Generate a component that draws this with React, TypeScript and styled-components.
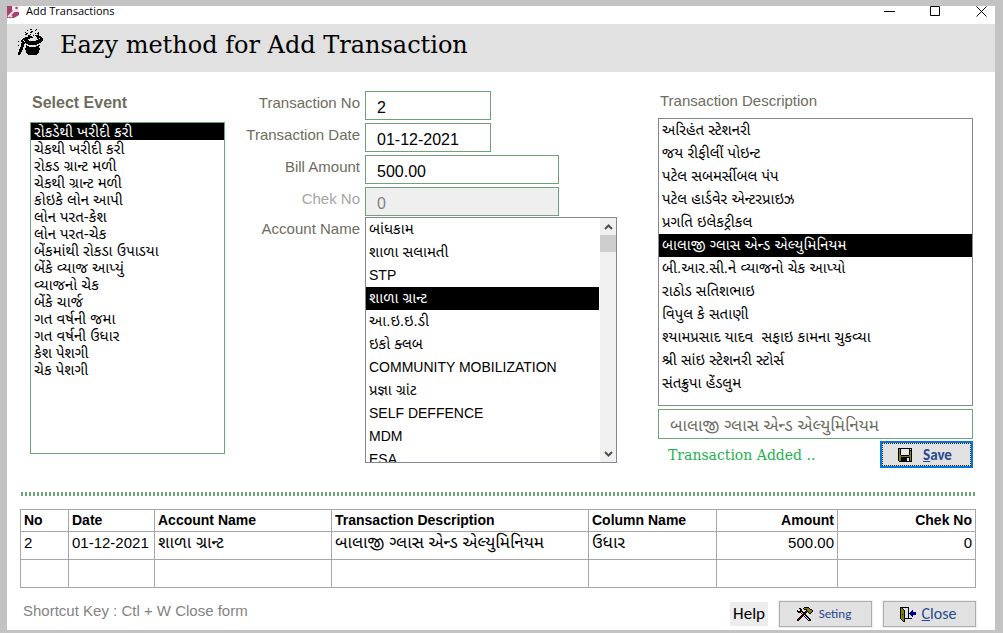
import React from "react";
import styled, { createGlobalStyle } from "styled-components";

const UI = '"Liberation Sans", Arial, "Noto Sans Gujarati", "Lohit Gujarati", sans-serif';
const SLAB = 'Rockwell, "DejaVu Serif", serif';
const BUTTON = 'Calibri, Lato, sans-serif';
const GREEN = "#6fa276";
const LABEL = "#6d6c5e";

const GlobalStyle = createGlobalStyle`
  *, *::before, *::after { box-sizing: border-box; }
  body { margin: 0; background: #c3c3c3; font-family: ${UI}; color: #000; }
  button, input, select { font: inherit; margin: 0; }
`;

const Frame = styled.div`
  min-height: 100vh;
  display: flex;
  padding: 6px 8px 3px 7px;
`;

const Window = styled.div`
  flex: 1;
  min-width: 0;
  background: #fff;
`;

const TitleBar = styled.div`
  display: flex;
  height: 18px;
  font: 11px/10px "Segoe UI", "Open Sans", sans-serif;
`;

const TitleText = styled.span`
  flex: 1;
  padding-left: 6px;
`;

const Controls = styled.div`
  display: flex;
  gap: 18px;
`;

const ControlButton = styled.button`
  width: 28px;
  height: 12px;
  padding: 0;
  border: 0;
  background: none;
  display: flex;
  justify-content: center;
`;

const Banner = styled.header`
  display: flex;
  align-items: flex-start;
  gap: 17px;
  height: 48px;
  padding: 5px 11px 0;
  background: #e1e1e1;
`;

const BannerTitle = styled.h1`
  margin: 0;
  font: 24px/32px ${SLAB};
`;

const Main = styled.main`
  display: grid;
  grid-template-columns: minmax(0, 195fr) minmax(0, 393fr) minmax(0, 315fr);
  column-gap: 20px;
  padding: 19px 22px 0 23px;
`;

const Column = styled.section`
  display: flex;
  flex-direction: column;
`;

const ColumnLabel = styled.label<{ $bold?: boolean }>`
  padding-left: 2px;
  margin-bottom: 7px;
  color: ${LABEL};
  font-size: ${(p) => (p.$bold ? 16 : 15)}px;
  font-weight: ${(p) => (p.$bold ? 700 : 400)};
  line-height: ${(p) => (p.$bold ? 24 : 20)}px;
`;

const List = styled.select<{ $dense?: boolean; $height: number; $border?: string }>`
  appearance: none;
  width: 100%;
  height: ${(p) => p.$height}px;
  padding: 0;
  border: ${(p) => (p.$border ? `1px solid ${p.$border}` : "0")};
  border-radius: 0;
  outline: 0;
  background: #fff;
  overflow: hidden;

  option {
    display: block;
    height: ${(p) => (p.$dense ? 17 : 23)}px;
    min-height: 0;
    padding: ${(p) => (p.$dense ? 0 : 3)}px 3px 0;
    color: #000;
    font: 14px ${UI};
    white-space: pre;
  }
  option:lang(gu) {
    padding-top: ${(p) => (p.$dense ? 0 : 2)}px;
    font-size: 15px;
  }
  option:checked {
    background: #000 linear-gradient(#000, #000);
    -webkit-text-fill-color: #fff;
  }
`;

const FormColumn = styled(Column)`
  padding-right: 21px;
  gap: 1px;
`;

const Fields = styled.div`
  display: flex;
  flex-direction: column;
  gap: 3px;
`;

const Field = styled.div`
  display: grid;
  grid-template-columns: 115px minmax(0, 1fr);
  column-gap: 5px;
`;

const FieldLabel = styled.label<{ $muted?: boolean }>`
  color: ${(p) => (p.$muted ? "#a5a5a5" : LABEL)};
  font-size: 15px;
  line-height: 24px;
  text-align: right;
  white-space: nowrap;
`;

const TextInput = styled.input<{ $width?: string }>`
  width: ${(p) => p.$width ?? "100%"};
  height: 29px;
  padding: 5px 10px 0 11px;
  border: 1px solid ${GREEN};
  border-radius: 0;
  outline: 0;
  background: #fff;
  color: #000;
  font-size: 16px;

  &:disabled {
    background: #efefef;
    color: #838383;
  }
  &:lang(gu) {
    height: 30px;
    color: ${LABEL};
    font-size: 17px;
  }
`;

const ScrollBox = styled.div`
  display: flex;
  border: 1px solid #828790;
`;

const ScrollBar = styled.div`
  flex: none;
  width: 17px;
  display: flex;
  flex-direction: column;
  background: #f0f0f0;
  border-left: 1px solid #fff;
`;

const ScrollButton = styled.button`
  height: 17px;
  padding: 0;
  border: 0;
  background: none;
  display: flex;
  align-items: center;
  justify-content: center;
`;

const ScrollThumb = styled.div`
  height: 17px;
  margin-bottom: auto;
  background: #cdcdcd;
`;

const Stack = styled.div`
  display: grid;
  row-gap: 3px;
`;

const SaveRow = styled.div`
  display: flex;
  align-items: center;
  justify-content: space-between;
  padding: 2px 0 0 10px;
`;

const Status = styled.output`
  color: #22b14c;
  font: 14px/24px ${SLAB};
`;

const PushButton = styled.button<{ $size?: number }>`
  width: 93px;
  height: 26px;
  display: flex;
  align-items: center;
  justify-content: center;
  gap: 6px;
  padding: 0 3px 0 0;
  border: 1px solid #adadad;
  box-shadow: 0 0 0 1px #efefef;
  background: #e1e1e1;
  color: #27488c;
  font: ${(p) => p.$size ?? 16}px/20px ${BUTTON};
`;

const SaveButton = styled(PushButton)`
  height: 27px;
  gap: 11px;
  border: 2px solid #0078d7;
  box-shadow: none;
  outline: 1px dotted #40200a;
  outline-offset: -3px;
  font-size: 15px;
  font-weight: 700;
`;

const Divider = styled.hr`
  height: 4px;
  margin: 24px 20px 13px 14px;
  border: 0;
  background: repeating-linear-gradient(90deg, ${GREEN} 0 2px, #fff 2px 4px);
`;

const TableWrap = styled.div`
  padding: 0 19px 0 13px;
`;

const Table = styled.table`
  width: 100%;
  table-layout: fixed;
  border-collapse: collapse;
  font-size: 15px;

  th, td {
    height: 28px;
    padding: 0 3px 6px;
    border: 1px solid #a6a6aa;
    text-align: left;
    white-space: nowrap;
    line-height: 20px;
  }
  th {
    height: 22px;
    padding: 0 3px 1px;
    font-size: 14px;
  }
  td:lang(gu) { font-size: 17px; }
  th:nth-child(n + 6), td:nth-child(n + 6) { text-align: right; }
`;

const Footer = styled.footer`
  display: flex;
  align-items: center;
  gap: 11px;
  padding: 13px 19px 0 16px;
`;

const Shortcut = styled.span`
  flex: 1;
  padding-bottom: 8px;
  color: #838383;
  font-size: 15px;
`;

const HelpButton = styled.button`
  height: 24px;
  padding: 0 3px;
  border: 0;
  background: #ededed;
  font: 17px/24px ${BUTTON};
`;

const PALETTE: Record<string, string> = {
  K: "#000000", O: "#808000", W: "#e8e8e8", R: "#800000", B: "#000090",
};

function PixelIcon({ rows }: { rows: string[] }) {
  const cells: React.ReactNode[] = [];
  rows.forEach((row, y) => {
    let x = 0;
    while (x < row.length) {
      const c = row[x];
      let n = 1;
      while (row[x + n] === c) n++;
      if (PALETTE[c]) cells.push(<rect key={`${x}-${y}`} x={x} y={y} width={n} height={1} fill={PALETTE[c]} />);
      x += n;
    }
  });
  return (
    <svg width={rows[0].length} height={rows.length} shapeRendering="crispEdges" aria-hidden="true">
      {cells}
    </svg>
  );
}

const FLOPPY = [
  "KKKKKKKKKKKKKK",
  "KOKWWWWWWWWKWK",
  "KOKWWWWWWWWKKK",
  "KOKWWWWWWWWKOK",
  "KOKWWWWWWWWKOK",
  "KOKWWWWWWWWKOK",
  "KOKWWWWWWWWKOK",
  "KOOKKKKKKKKOOK",
  "KOOOOOOOOOOOOK",
  "KOOKKKKKKKKKOK",
  "KOOKKKKKKWWKOK",
  "KOOKKKKKKWWKOK",
  "KOOKKKKKKWWKOK",
  ".KKKKKKKKKKKKK",
];

const TOOLS = [
  ".......KKKKK....",
  "..KK..KOOOOOK...",
  "...KK..KKKOOOKK.",
  "K..KK....KOOOOOK",
  "KKKKKK..KRKOOOOK",
  ".KKKWKKKRK.KOOK.",
  "....KWKRK...KK..",
  ".....KRKK.......",
  "....KRKWKK......",
  "...KRK.KWKK.....",
  "..KRK...KWKK....",
  ".KRK.....KWKK...",
  "KRK.......KWKK..",
  "KK.........KKK..",
];

const DOOR = [
  "KKKKKKKKK.......",
  "KOK.....K.......",
  "KOOK....K.......",
  "KOOOK...K...B...",
  "KOOOK...K..BB...",
  "KOOOK...K.BBBBBB",
  "KOOOK...KBBBBBBB",
  "KOKOK...K.BBBBBB",
  "KOOOK...K..BB...",
  "KOOOK...K...B...",
  "KOOOK...K.......",
  "KOOOKKKKKKKK....",
  ".KOOK...........",
  "..KOK...........",
  "...KK...........",
];

const HAT = [
  "............KK....K......",
  ".........K.......K.......",
  ".............KK..........",
  ".......K....KK......K....",
  "........KK.......K.KK....",
  ".......KK...K.......K....",
  "..........KK...K.KKKK....",
  "..........KKKK....KKKKK..",
  ".......KKKKKKKK....KKKKK.",
  ".....KKKKKKK.......KK.KKK",
  "....KKKKKK..........KKKKK",
  "...KK.KKKKK.......KKKKKKK",
  "K..KKK.KKKKKKKKKKKKKKKKK.",
  "....KKKKKKKKKKKKKKKKKKK..",
  "...KKKK.KKKKKKKKKKKKK....",
  "...KKK....KKKKKKKKK......",
  "K..KKK..K...........KK...",
  "...KKK..KKK.......KKK....",
  "..KKK...KKKKKKKKKKKKK....",
  "..KKK..KKKKKKKKKKKKKKK...",
  ".KKKK..KKKKKKKKKKKKKKK...",
  ".KKK....KKKKKKKKKKKKK....",
  ".KKK....KKKKKKKKKKKKK....",
  "KKK.....KKKKKKKKKKKKK....",
  "KKK......KKKKKKKKKKK.....",
  "KK........KKKKKKKKK......",
];

function AccessIcon() {
  return (
    <svg width="13" height="12" aria-hidden="true">
      <path d="M0 0h9l3 3v6l-5 3H0z" fill="#a4426f" />
      <path d="M1 11L7 5M3 9l2 2" stroke="#f3dce7" strokeWidth="2" />
      <path d="M5 0h7v6H7L5 4z" fill="#f2e6ec" />
      <circle cx="9.5" cy="2" r="1.2" fill="#a4426f" />
    </svg>
  );
}

function Chevron({ up }: { up?: boolean }) {
  return (
    <svg width="9" height="6" aria-hidden="true">
      <path d={up ? "M1 5l3.5-3.5L8 5" : "M1 1l3.5 3.5L8 1"} fill="none" stroke="#505050" strokeWidth="2" />
    </svg>
  );
}

const EVENTS = [
  "રોકડેથી ખરીદી કરી", "ચેકથી ખરીદી કરી", "રોકડ ગ્રાન્ટ મળી", "ચેકથી ગ્રાન્ટ મળી",
  "કોઇકે લોન આપી", "લોન પરત-કેશ", "લોન પરત-ચેક", "બેંકમાંથી રોકડા ઉપાડયા",
  "બેંકે વ્યાજ આપ્યું", "વ્યાજનો ચેક", "બેંકે ચાર્જ", "ગત વર્ષની જમા",
  "ગત વર્ષની ઉધાર", "કેશ પેશગી", "ચેક પેશગી",
];

const ACCOUNTS = [
  "બાંધકામ", "શાળા સલામતી", "STP", "શાળા ગ્રાન્ટ", "આ.ઇ.ઇ.ડી", "ઇકો ક્લબ",
  "COMMUNITY MOBILIZATION", "પ્રજ્ઞા ગ્રાંટ", "SELF DEFFENCE", "MDM", "ESA",
];

const DESCRIPTIONS = [
  "અરિહંત સ્ટેશનરી", "જય રીફીલીં પોઇન્ટ", "પટેલ સબમર્સીબલ પંપ", "પટેલ હાર્ડવેર એન્ટરપ્રાઇઝ",
  "પ્રગતિ ઇલેકટ્રીકલ", "બાલાજી ગ્લાસ એન્ડ એલ્યુમિનિયમ", "બી.આર.સી.ને વ્યાજનો ચેક આપ્યો",
  "રાઠોડ સતિશભાઇ", "વિપુલ કે સતાણી", "શ્યામપ્રસાદ યાદવ\u00a0 સફાઇ કામના ચુકવ્યા",
  "શ્રી સાંઇ સ્ટેશનરી સ્ટોર્સ", "સંતક્રુપા હેંડલુમ",
];

const COLUMNS: [string, number][] = [
  ["No", 48], ["Date", 86], ["Account Name", 177], ["Transaction Description", 257],
  ["Column Name", 128], ["Amount", 121], ["Chek No", 138],
];
const TOTAL = COLUMNS.reduce((sum, [, w]) => sum + w, 0);

const ROWS = [
  ["2", "01-12-2021", "શાળા ગ્રાન્ટ", "બાલાજી ગ્લાસ એન્ડ એલ્યુમિનિયમ", "ઉધાર", "500.00", "0"],
  ["", "", "", "", "", "", ""],
];

const FIELDS = [
  { id: "no", label: "Transaction No", value: "2", width: "50%" },
  { id: "date", label: "Transaction Date", value: "01-12-2021", width: "50%" },
  { id: "bill", label: "Bill Amount", value: "500.00", width: "77%" },
  { id: "chek", label: "Chek No", value: "0", width: "77%", disabled: true },
];

const langOf = (text: string) => (/[\u0A80-\u0AFF]/.test(text) ? "gu" : "en");

const options = (items: string[]) => items.map((t) => <option key={t} lang={langOf(t)}>{t}</option>);

export default function App() {
  return (
    <Frame>
      <GlobalStyle />
      <Window>
        <TitleBar>
          <AccessIcon />
          <TitleText>Add Transactions</TitleText>
          <Controls>
            <ControlButton aria-label="Minimize">
              <svg width="11" height="11"><path d="M0 5.5h11" stroke="#000" /></svg>
            </ControlButton>
            <ControlButton aria-label="Maximize">
              <svg width="11" height="11"><path d="M.5.5h9v9H.5z" fill="none" stroke="#000" /></svg>
            </ControlButton>
            <ControlButton aria-label="Close window">
              <svg width="11" height="11"><path d="M.5.5l10 10M10.5.5l-10 10" fill="none" stroke="#000" /></svg>
            </ControlButton>
          </Controls>
        </TitleBar>
        <Banner>
          <PixelIcon rows={HAT} />
          <BannerTitle>Eazy method for Add Transaction</BannerTitle>
        </Banner>
        <Main>
          <Column>
            <ColumnLabel $bold htmlFor="event">Select Event</ColumnLabel>
            <List id="event" size={15} $dense $height={332} $border={GREEN} defaultValue={EVENTS[0]}>
              {options(EVENTS)}
            </List>
          </Column>
          <FormColumn>
            <Fields>
              {FIELDS.map((f) => (
                <Field key={f.id}>
                  <FieldLabel htmlFor={f.id} $muted={f.disabled}>{f.label}</FieldLabel>
                  <TextInput id={f.id} lang="en" defaultValue={f.value} disabled={f.disabled} $width={f.width} />
                </Field>
              ))}
            </Fields>
            <Field>
              <FieldLabel htmlFor="account">Account Name</FieldLabel>
              <ScrollBox>
                <List id="account" size={10} $height={244} defaultValue={ACCOUNTS[3]}>
                  {options(ACCOUNTS)}
                </List>
                <ScrollBar>
                  <ScrollButton aria-label="Scroll up"><Chevron up /></ScrollButton>
                  <ScrollThumb />
                  <ScrollButton aria-label="Scroll down"><Chevron /></ScrollButton>
                </ScrollBar>
              </ScrollBox>
            </Field>
          </FormColumn>
          <Column>
            <ColumnLabel htmlFor="description">Transaction Description</ColumnLabel>
            <Stack>
              <List id="description" size={12} $height={288} $border="#828790" defaultValue={DESCRIPTIONS[5]}>
                {options(DESCRIPTIONS)}
              </List>
              <TextInput aria-label="Selected description" lang="gu" defaultValue={DESCRIPTIONS[5]} />
            </Stack>
            <SaveRow>
              <Status>Transaction Added ..</Status>
              <SaveButton>
                <PixelIcon rows={FLOPPY} />
                <span><u>S</u>ave</span>
              </SaveButton>
            </SaveRow>
          </Column>
        </Main>
        <Divider />
        <TableWrap>
          <Table>
            <colgroup>
              {COLUMNS.map(([name, w]) => <col key={name} style={{ width: `${(w / TOTAL) * 100}%` }} />)}
            </colgroup>
            <thead>
              <tr>{COLUMNS.map(([name]) => <th key={name} scope="col">{name}</th>)}</tr>
            </thead>
            <tbody>
              {ROWS.map((row, i) => (
                <tr key={i}>{row.map((cell, j) => <td key={j} lang={langOf(cell)}>{cell}</td>)}</tr>
              ))}
            </tbody>
          </Table>
        </TableWrap>
        <Footer>
          <Shortcut>Shortcut Key : Ctl + W Close form</Shortcut>
          <HelpButton>Help</HelpButton>
          <PushButton $size={13}>
            <PixelIcon rows={TOOLS} />
            <span>Seting</span>
          </PushButton>
          <PushButton>
            <PixelIcon rows={DOOR} />
            <span><u>C</u>lose</span>
          </PushButton>
        </Footer>
      </Window>
    </Frame>
  );
}
